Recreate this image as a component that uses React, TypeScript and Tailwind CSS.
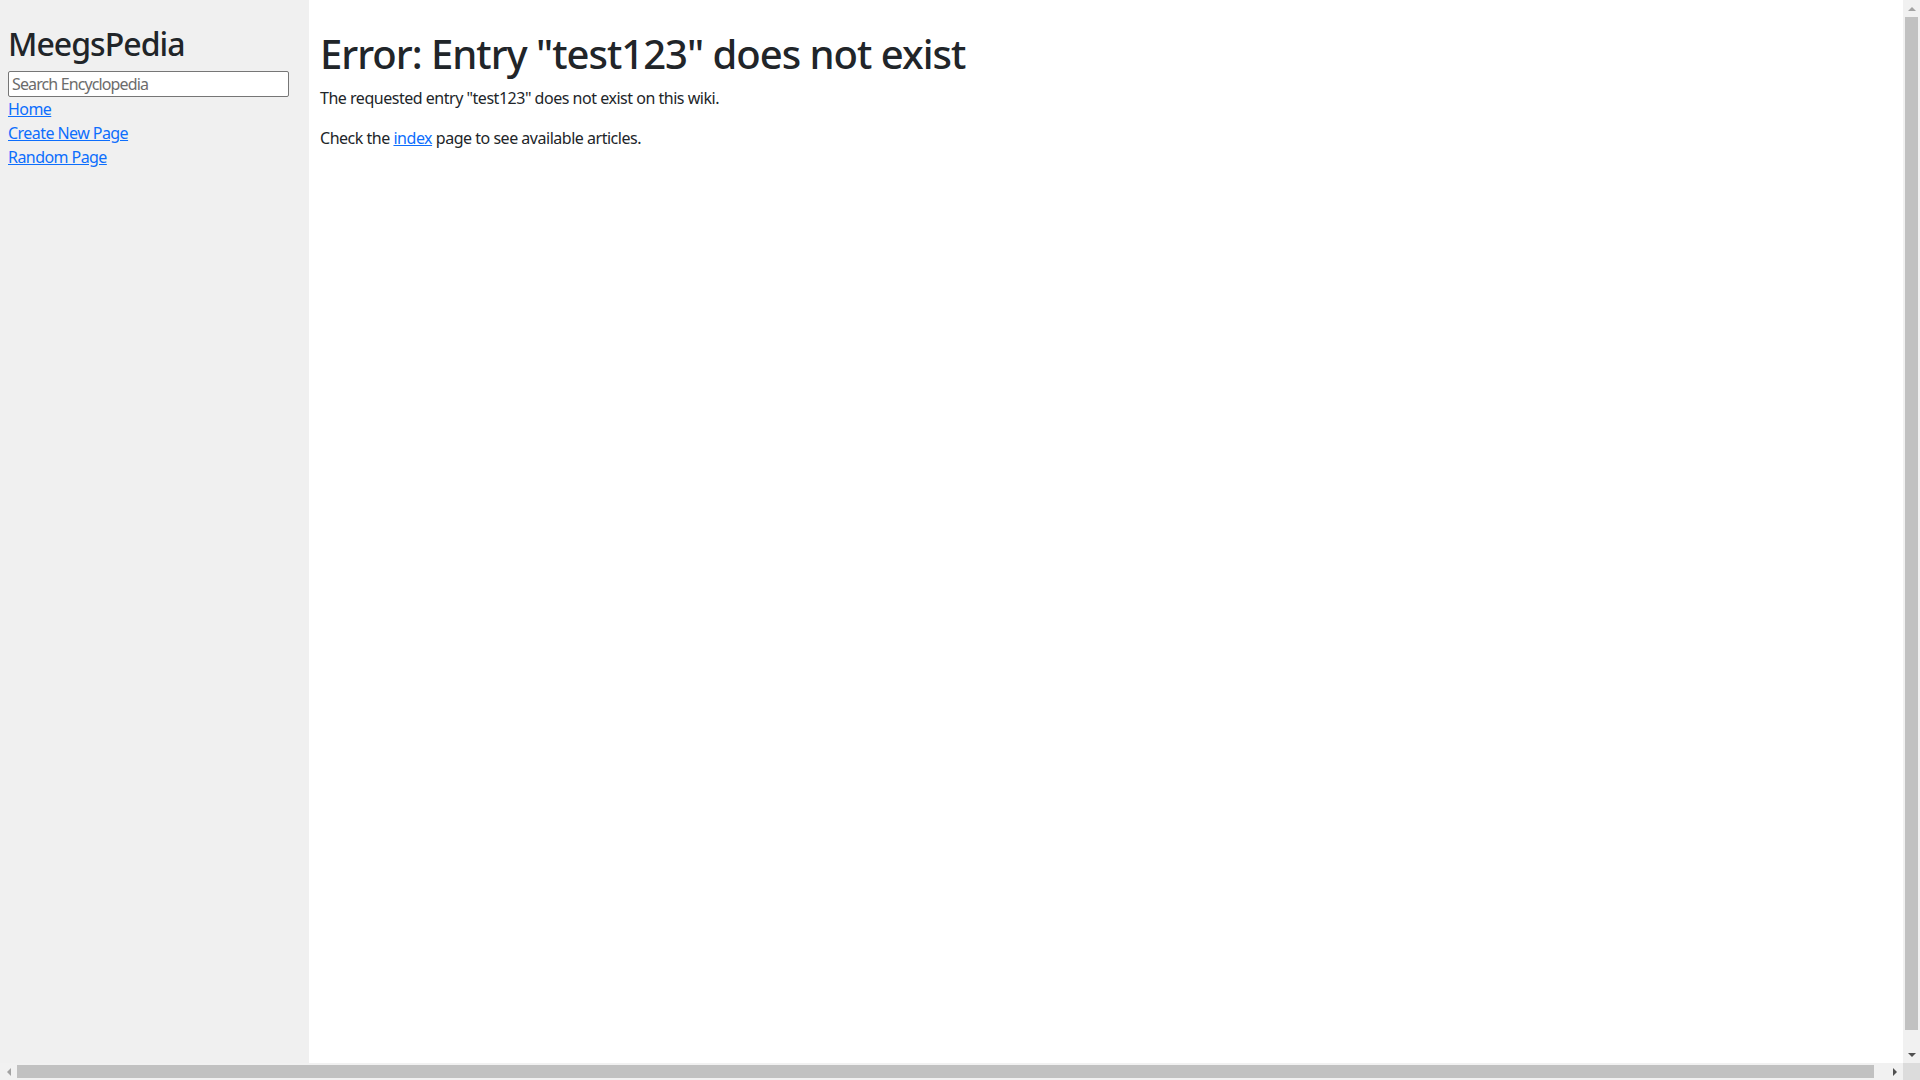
const links = ["Home", "Create New Page", "Random Page"];

const Sidebar = () => {
 return (
  <div className="w-[309px] shrink-0 bg-[#f0f0f0] pt-[25px] px-2 tracking-[-0.035em]">
   <h2 className="text-[32px] leading-[1.2] font-medium tracking-[-0.03em] mb-2">
    MeegsPedia
   </h2>
   <input
    type="text"
    placeholder="Search Encyclopedia"
    className="block w-[281px] h-[26px] bg-white border border-[#767676] rounded-[2px] px-[3px] text-[16px] leading-6 tracking-[-0.055em] placeholder:text-[#6c6c6c] outline-none"
   />
   {links.map((l) => (
    <div key={l} className="leading-6">
     <a href="#" className="text-[#0d6efd] underline">
      {l}
     </a>
    </div>
   ))}
  </div>
 );
};

const Arrow = ({ dir, dark }: { dir: "up" | "down" | "left" | "right"; dark?: boolean }) => {
 const pts = {
  up: "0,5 4,1 8,5",
  down: "0,1 4,5 8,1",
  left: "5,0 1,4 5,8",
  right: "1,0 5,4 1,8",
 }[dir];
 const vertical = dir === "up" || dir === "down";
 return (
  <svg width={vertical ? 8 : 6} height={vertical ? 6 : 8} viewBox={vertical ? "0 0 8 6" : "0 0 6 8"}>
   <polygon points={pts} fill={dark ? "#505050" : "#a3a3a3"} />
  </svg>
 );
};

export default function App() {
 return (
  <div
   className="grid grid-cols-[1fr_17px] grid-rows-[1fr_17px] w-screen h-screen overflow-hidden bg-white text-[#212529] text-[16px] leading-6"
   style={{ fontFamily: '"Noto Sans", sans-serif' }}
  >
   <div className="flex overflow-hidden min-h-0">
    <Sidebar />
    <div className="flex-1 pt-[30px] pl-[11px] tracking-[-0.03em]">
     <h1 className="text-[40px] leading-[1.2] font-medium tracking-[-0.025em] mb-2">
      Error: Entry "test123" does not exist
     </h1>
     <p className="mb-4">
      The requested entry "test123" does not exist on this wiki.
     </p>
     <p className="mb-4">
      Check the{" "}
      <a href="#" className="text-[#0d6efd] underline">
       index
      </a>{" "}
      page to see available articles.
     </p>
    </div>
   </div>

   {/* vertical scrollbar */}
   <div className="flex flex-col bg-[#f1f1f1]">
    <div className="h-[17px] flex items-center justify-center">
     <Arrow dir="up" />
    </div>
    <div className="flex-1 px-[2px]">
     <div className="h-[1013px] bg-[#c1c1c1]" />
    </div>
    <div className="h-[17px] flex items-center justify-center">
     <Arrow dir="down" dark />
    </div>
   </div>

   {/* horizontal scrollbar */}
   <div className="flex bg-[#f1f1f1]">
    <div className="w-[17px] flex items-center justify-center">
     <Arrow dir="left" />
    </div>
    <div className="flex-1 py-[2px]">
     <div className="w-[1857px] h-full bg-[#c1c1c1]" />
    </div>
    <div className="w-[17px] flex items-center justify-center">
     <Arrow dir="right" dark />
    </div>
   </div>
   <div className="bg-[#dcdcdc]" />
  </div>
 );
}
